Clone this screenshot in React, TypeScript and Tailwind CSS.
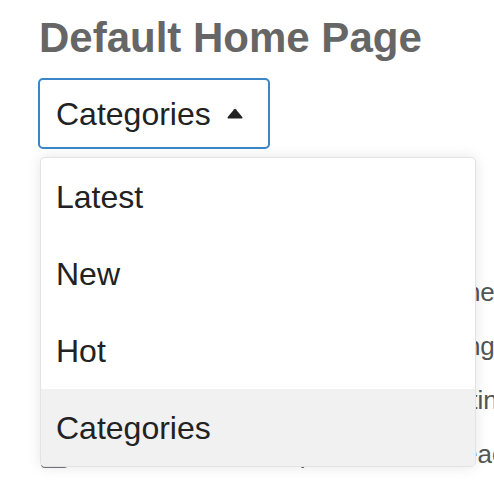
import React from "react";

const options = ["Latest", "New", "Hot", "Categories"];

const otherPrefs = [
  "Open all external links in a brand new tab",
  "Enable quick searching when typing",
  "Hide my public profile when reposting",
  "Enable the unread post count on each category",
];

function CaretUp() {
  return (
    <svg width="16" height="11" viewBox="0 0 16 11" className="shrink-0">
      <path
        d="M7.2 1.2 Q8 0.3 8.8 1.2 L15.3 8.9 Q16 10.6 14.4 10.6 L1.6 10.6 Q0 10.6 0.7 8.9 Z"
        fill="#222"
      />
    </svg>
  );
}

export default function App() {
  const selected = "Categories";

  return (
    <div className="h-[482px] w-full overflow-hidden bg-white pl-[38px] pt-[17px] font-['Liberation_Sans',Arial,sans-serif]">
      <h2 className="ml-px text-[42px] font-bold leading-[42px] text-[#666]">
        Default Home Page
      </h2>

      <div className="relative mt-[19px] w-[232px]">
        <button className="flex h-[71px] w-[232px] items-center rounded-[5px] border-2 border-[#3a86c8] bg-white pl-[16px] text-[32px] text-[#222]">
          <span>{selected}</span>
          <span className="ml-[16px]">
            <CaretUp />
          </span>
        </button>

        {/* open menu */}
        <ul className="absolute left-[2px] top-[79px] z-10 w-[436px] overflow-hidden rounded-[5px] border border-[#e3e3e3] bg-white shadow-[0_0_14px_rgba(0,0,0,0.1)]">
          {options.map((opt) => (
            <li
              key={opt}
              className={
                opt === selected
                  ? "flex h-[77px] items-center bg-[#f1f1f1] pl-[15px] text-[32px] text-[#222]"
                  : "flex h-[77px] items-center pl-[15px] text-[32px] text-[#222]"
              }
            >
              {opt}
            </li>
          ))}
        </ul>
      </div>

      <div className="mt-[116px] flex flex-col">
        {otherPrefs.map((label) => (
          <label
            key={label}
            className="flex h-[54px] items-center gap-3 whitespace-nowrap text-[26px] text-[#555]"
          >
            <span className="ml-[3px] h-[27px] w-[27px] shrink-0 rounded-[4px] border-2 border-[#767680] bg-white" />
            <span>{label}</span>
          </label>
        ))}
      </div>
    </div>
  );
}
